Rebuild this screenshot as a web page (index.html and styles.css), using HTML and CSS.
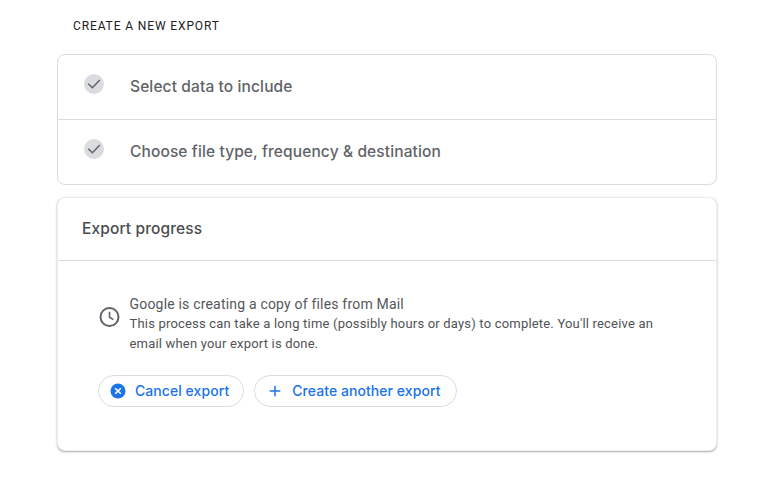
FILE: index.html
```html
<!DOCTYPE html>
<html lang="en">
<head>
<meta charset="utf-8">
<title>Create a new export</title>
<link rel="stylesheet" href="styles.css">
</head>
<body>
<main class="page">
  <h1 class="page-title">CREATE A NEW EXPORT</h1>
  <section class="steps">
    <div class="step">
      <span class="step-badge"><svg width="20" height="20" viewBox="0 0 20 20"><path d="M4.2 9.8l4.2 3.9 7.4-7.6" fill="none" stroke="#5f6368" stroke-width="1.5"/></svg></span>
      <h2 class="step-title">Select data to include</h2>
    </div>
    <div class="step">
      <span class="step-badge"><svg width="20" height="20" viewBox="0 0 20 20"><path d="M4.2 9.8l4.2 3.9 7.4-7.6" fill="none" stroke="#5f6368" stroke-width="1.5"/></svg></span>
      <h2 class="step-title">Choose file type, frequency &amp; destination</h2>
    </div>
  </section>
  <section class="progress-card">
    <h2 class="progress-title">Export progress</h2>
    <div class="progress-body">
      <div class="status">
        <svg class="status-icon" width="24" height="24" viewBox="0.5 0 24 24"><circle cx="12" cy="12" r="9" fill="none" stroke="#5f6368" stroke-width="2"/><path d="M12 6.8v5.5l3.9 2.3" fill="none" stroke="#5f6368" stroke-width="1.6"/></svg>
        <div class="status-text">
          <p class="status-head">Google is creating a copy of files from Mail</p>
          <p class="status-note">This process can take a long time (possibly hours or days) to complete. You'll receive an email when your export is done.</p>
        </div>
      </div>
      <div class="actions">
        <button class="pill pill-cancel" type="button">
          <svg width="16" height="16" viewBox="0 0 16 16"><circle cx="8" cy="8" r="7.5" fill="#1a73e8"/><path d="M5.2 5.2l5.6 5.6M10.8 5.2l-5.6 5.6" stroke="#fff" stroke-width="1.6"/></svg>
          Cancel export
        </button>
        <button class="pill pill-create" type="button">
          <svg width="14" height="14" viewBox="0 0 14 14"><path d="M7 1.7v10.6M1.7 7h10.6" stroke="#1a73e8" stroke-width="1.5"/></svg>
          Create another export
        </button>
      </div>
    </div>
  </section>
</main>
</body>
</html>
```
FILE: styles.css
```css
* { box-sizing: border-box; }
html, body { margin: 0; padding: 0; background: #fff; }
body { font-family: Roboto, "Liberation Sans", sans-serif; color: #5f6368; }
.page { width: 660px; margin-left: 57px; padding-bottom: 36px; }
.page-title {
  margin: 0;
  height: 54px;
  padding: 19px 0 0 16px;
  font: 400 12px/14px Roboto, sans-serif;
  letter-spacing: 0.88px;
  color: #202124;
}
.steps {
  height: 131px;
  border: 1px solid #dadce0;
  border-radius: 8px;
  display: flex;
  flex-direction: column;
}
.step {
  flex: 1;
  display: flex;
  align-items: flex-start;
  padding: 19px 0 0 26px;
}
.step + .step { border-top: 1px solid #dadce0; }
.step-badge {
  width: 20px;
  height: 20px;
  border-radius: 50%;
  background: #dadce0;
  display: block;
}
.step-badge svg { display: block; }
.step-title {
  margin: 4px 0 0 26px;
  font: 500 15.5px/18px Inter, sans-serif;
  letter-spacing: .12px;
  color: #5f6368;
}
.progress-card {
  margin-top: 12px;
  height: 254px;
  border: 1px solid #eceef0;
  border-radius: 8px;
  background: #fff;
  box-shadow: 0 1px 2px rgba(60,64,67,.45);
}
.progress-title {
  margin: 0;
  height: 63px;
  padding: 22px 0 0 24px;
  border-bottom: 1px solid #dadce0;
  font: 500 15.5px/18px Inter, sans-serif;
  letter-spacing: .12px;
  color: #4a4d50;
}
.progress-body { padding: 33px 0 0 40px; }
.status { display: flex; align-items: flex-start; }
.status-icon { display: block; flex: none; margin-top: 11px; }
.status-text { margin-left: 7.5px; width: 535px; }
.status-head { margin: 0; font-size: 14px; line-height: 20px; color: #54575a; letter-spacing: .19px; }
.status-note { margin: 0; font-size: 13px; line-height: 20px; color: #505356; letter-spacing: .19px; }
.actions { display: flex; gap: 10px; margin-top: 21px; }
.pill {
  height: 32px;
  padding: 0 14px 0 11px;
  display: flex;
  align-items: center;
  gap: 9px;
  border: 1px solid #dadce0;
  border-radius: 16px;
  background: #fff;
  color: #1a73e8;
  font: 500 14px/16px Inter, sans-serif;
  letter-spacing: .06px;
}
.pill svg { display: block; flex: none; }
.pill-create { padding-left: 13px; padding-right: 16px; gap: 10px; }
```
